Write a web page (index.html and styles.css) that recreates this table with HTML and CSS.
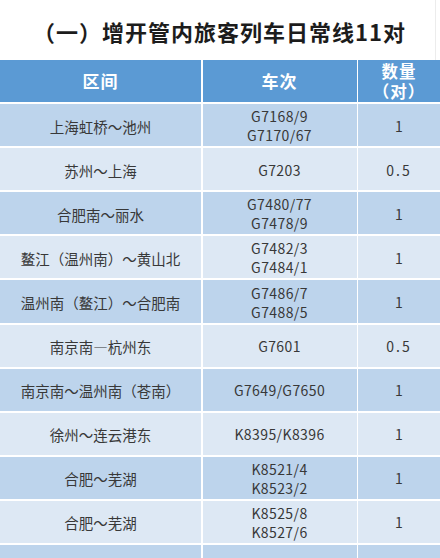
FILE: index.html
```html
<!DOCTYPE html>
<html lang="zh-CN">
<head>
<meta charset="utf-8">
<link rel="stylesheet" href="styles.css">
</head>
<body>
<div class="page">
  <h1 class="title">（一）增开管内旅客列车日常线11对</h1>
  <div class="table">
    <div class="row head">
      <div class="cell">区间</div>
      <div class="cell">车次</div>
      <div class="cell stack"><span>数量</span><span>（对）</span></div>
    </div>
    <div class="row odd">
      <div class="cell">上海虹桥～池州</div>
      <div class="cell num stack"><span>G7168/9</span><span>G7170/67</span></div>
      <div class="cell num">1</div>
    </div>
    <div class="row even">
      <div class="cell">苏州～上海</div>
      <div class="cell num">G7203</div>
      <div class="cell num half">0.5</div>
    </div>
    <div class="row odd">
      <div class="cell">合肥南～丽水</div>
      <div class="cell num stack"><span>G7480/77</span><span>G7478/9</span></div>
      <div class="cell num">1</div>
    </div>
    <div class="row even">
      <div class="cell">鳌江（温州南）～黄山北</div>
      <div class="cell num stack"><span>G7482/3</span><span>G7484/1</span></div>
      <div class="cell num">1</div>
    </div>
    <div class="row odd">
      <div class="cell">温州南（鳌江）～合肥南</div>
      <div class="cell num stack"><span>G7486/7</span><span>G7488/5</span></div>
      <div class="cell num">1</div>
    </div>
    <div class="row even">
      <div class="cell">南京南—杭州东</div>
      <div class="cell num">G7601</div>
      <div class="cell num half">0.5</div>
    </div>
    <div class="row odd">
      <div class="cell">南京南～温州南（苍南）</div>
      <div class="cell num">G7649/G7650</div>
      <div class="cell num">1</div>
    </div>
    <div class="row even">
      <div class="cell">徐州～连云港东</div>
      <div class="cell num">K8395/K8396</div>
      <div class="cell num">1</div>
    </div>
    <div class="row odd">
      <div class="cell">合肥～芜湖</div>
      <div class="cell num stack"><span>K8521/4</span><span>K8523/2</span></div>
      <div class="cell num">1</div>
    </div>
    <div class="row even">
      <div class="cell">合肥～芜湖</div>
      <div class="cell num stack"><span>K8525/8</span><span>K8527/6</span></div>
      <div class="cell num">1</div>
    </div>
    <div class="row odd tail">
      <div class="cell"></div>
      <div class="cell"></div>
      <div class="cell"></div>
    </div>
  </div>
</div>
</body>
</html>
```
FILE: styles.css
```css
html, body {
  margin: 0;
  padding: 0;
  background: #ffffff;
}
body {
  width: 440px;
  height: 558px;
  overflow: hidden;
  font-family: "Noto Sans CJK SC", "Noto Sans", sans-serif;
}
.page {
  display: flex;
  flex-direction: column;
}
.title {
  margin: 0 4px 0 0;
  height: 60px;
  display: flex;
  align-items: center;
  justify-content: center;
  padding-top: 2px;
  padding-left: 4px;
  box-sizing: border-box;
  font-size: 22px;
  font-weight: 700;
  letter-spacing: 1px;
  color: #1c1c1c;
  border-right: 1px solid #ececec;
}
.table {
  display: flex;
  flex-direction: column;
  gap: 2px;
}
.row {
  display: grid;
  grid-template-columns: 201px 154px 1fr;
  column-gap: 1.5px;
  height: 42.1px;
}
.row.tail {
  height: 12.9px;
}
.cell {
  display: flex;
  align-items: center;
  justify-content: center;
  font-size: 14.5px;
  color: #383838;
  line-height: 19px;
  padding-top: 2px;
  box-sizing: border-box;
  overflow: hidden;
}
.stack {
  flex-direction: column;
}
.stack span {
  display: block;
  height: 19px;
}
.head .cell {
  background: #5b9ad4;
  color: #ffffff;
  font-size: 17px;
  font-weight: 700;
  letter-spacing: 1px;
  line-height: 20px;
  padding-top: 0;
}
.head .stack {
  font-size: 16.5px;
  line-height: 20px;
}
.head .stack span {
  height: 20px;
}
.odd .cell {
  background: #bdd4ec;
}
.even .cell {
  background: #dde8f4;
}
.num {
  font-size: 14px;
  letter-spacing: 0.4px;
}
.half {
  letter-spacing: 2px;
}
```
